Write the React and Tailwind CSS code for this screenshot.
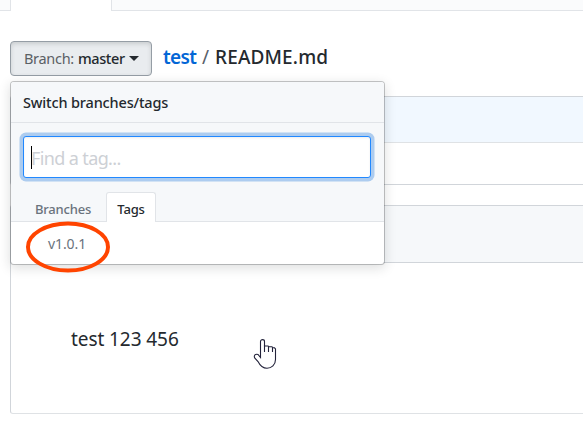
function HandCursor() {
  return (
    <svg className="absolute left-[253px] top-[338px] h-[32px] w-[24px]" viewBox="0 0 24 32" fill="none">
      <path
        d="M7.5 19.5V3.5C7.5 1 11.5 1 11.5 3.5V8H15L16 8.8H19L20 9.8H21.5L22.5 11V21.5C22.5 27 18.5 30.3 14 30.3C9.5 30.3 7 27.5 5 23.5L1.7 20C.5 17.5 2.5 15.5 5 16.5L7.5 19.5Z"
        fill="white"
        stroke="#22223a"
        strokeWidth="1.1"
      />
      <path d="M11.5 7V14M15.5 8.8V14M19.5 9.5V14" stroke="#22223a" strokeWidth="1.1" />
    </svg>
  );
}

function BranchMenu() {
  return (
    <div className="absolute left-[10px] top-[81px] h-[184px] w-[375px] overflow-visible rounded-[4px] border border-[#1b1f23]/25 bg-white bg-clip-padding shadow-[0_3px_12px_rgba(27,31,35,0.15)]">
      <div className="flex h-[41px] items-center rounded-t-[3px] border-b border-[#e1e4e8] bg-[#f6f8fa] pl-[12px] pt-[2px] text-[14.5px] font-medium text-[#24292e]">
        <span className="whitespace-nowrap tracking-[-0.16px]">Switch branches/tags</span>
      </div>
      <div className="flex h-[99px] flex-col border-b border-[#e1e4e8] bg-[#f6f8fa] pl-[12px] pr-[13px] pt-[13px]">
        <div className="flex h-[42px] shrink-0 items-center rounded-[3px] border border-[#2188ff] bg-white pl-[7px] shadow-[inset_0_1px_2px_rgba(27,31,35,0.075),0_0_0_3.5px_rgba(3,102,214,0.3)]">
          <span className="h-[23px] w-px bg-black" />
          <span className="-ml-px whitespace-nowrap pt-[3px] text-[18px] tracking-[-0.62px] text-[#cdd0d5]">Find a tag...</span>
        </div>
        <div className="mt-[14px] flex h-[30px] shrink-0 text-[13px] font-medium">
          <div className="flex w-[83px] items-center pl-[12px] pt-[5px] text-[#6a737d]">
            <span className="tracking-[-0.2px]">Branches</span>
          </div>
          <div className="flex w-[50px] items-center justify-center rounded-t-[3px] border border-b-0 border-[#e1e4e8] bg-white pt-[4px] text-[#24292e]">
            <span className="tracking-[-0.2px]">Tags</span>
          </div>
        </div>
      </div>
      <div className="flex h-[42px] items-center pl-[37px] text-[14px] text-[#6a737d]">
        <span className="tracking-[-0.1px]">v1.0.1</span>
      </div>
    </div>
  );
}

export default function App() {
  return (
    <div className="relative h-[441px] w-[583px] overflow-hidden bg-white font-['Noto_Sans','Open_Sans',sans-serif] text-[#24292e]">
      <div className="flex h-[11px]">
        <div className="w-[10px] border-b border-[#e1e4e8] bg-[#fafbfc]" />
        <div className="w-[102px] border-x border-[#e1e4e8] bg-white" />
        <div className="flex-1 border-b border-[#e1e4e8] bg-[#fafbfc]" />
      </div>
      <div className="flex items-center pl-[10px] pt-[30px]">
        <div className="flex h-[35px] w-[142px] items-center rounded-[4px] border border-[#959da5] bg-[#e9ecef] pl-[13px] text-[14.5px] shadow-[inset_0_2px_4px_rgba(27,31,35,0.15)]">
          <span className="w-[54px] whitespace-nowrap tracking-[-0.3px] text-[#5b6065]">Branch:</span>
          <span className="w-[47px] whitespace-nowrap font-medium tracking-[-0.4px]">master</span>
          <span className="ml-[4px] border-x-[5px] border-t-[5px] border-x-transparent border-t-[#24292e]" />
        </div>
        <div className="flex whitespace-nowrap pb-[3px] pl-[11px] text-[19px] leading-[28px]">
          <span className="w-[34px] font-semibold tracking-[-0.65px] text-[#0366d6]">test</span>
          <span className="ml-[5px] w-[8px] text-[#586069]">/</span>
          <span className="ml-[5px] font-medium tracking-[0.15px]">README.md</span>
        </div>
      </div>
      <div className="ml-[10px] mt-[20px] h-[89px] rounded-l-[3px] border border-r-0 border-[#d1d5da] bg-white">
        <div className="h-[46px] border-b border-[#dfe2e5] bg-[#f1f8ff]" />
      </div>
      <div className="ml-[10px] mt-[20px] h-[209px] rounded-l-[3px] border border-r-0 border-[#d1d5da] border-b-[#dfe2e5] bg-white">
        <div className="h-[57px] border-b border-[#d1d5da] bg-[#f6f8fa]" />
        <div className="pl-[60px] pt-[62px] text-[19px] leading-[28px]">
          <span className="tracking-[-0.08px]">test 123 456</span>
        </div>
      </div>
      <BranchMenu />
      <svg className="absolute left-[25px] top-[220px] h-[54px] w-[86px]" viewBox="0 0 86 54" fill="none">
        <ellipse cx="43" cy="27" rx="40" ry="23.5" stroke="#ff4400" strokeWidth="4" />
      </svg>
      <HandCursor />
    </div>
  );
}
